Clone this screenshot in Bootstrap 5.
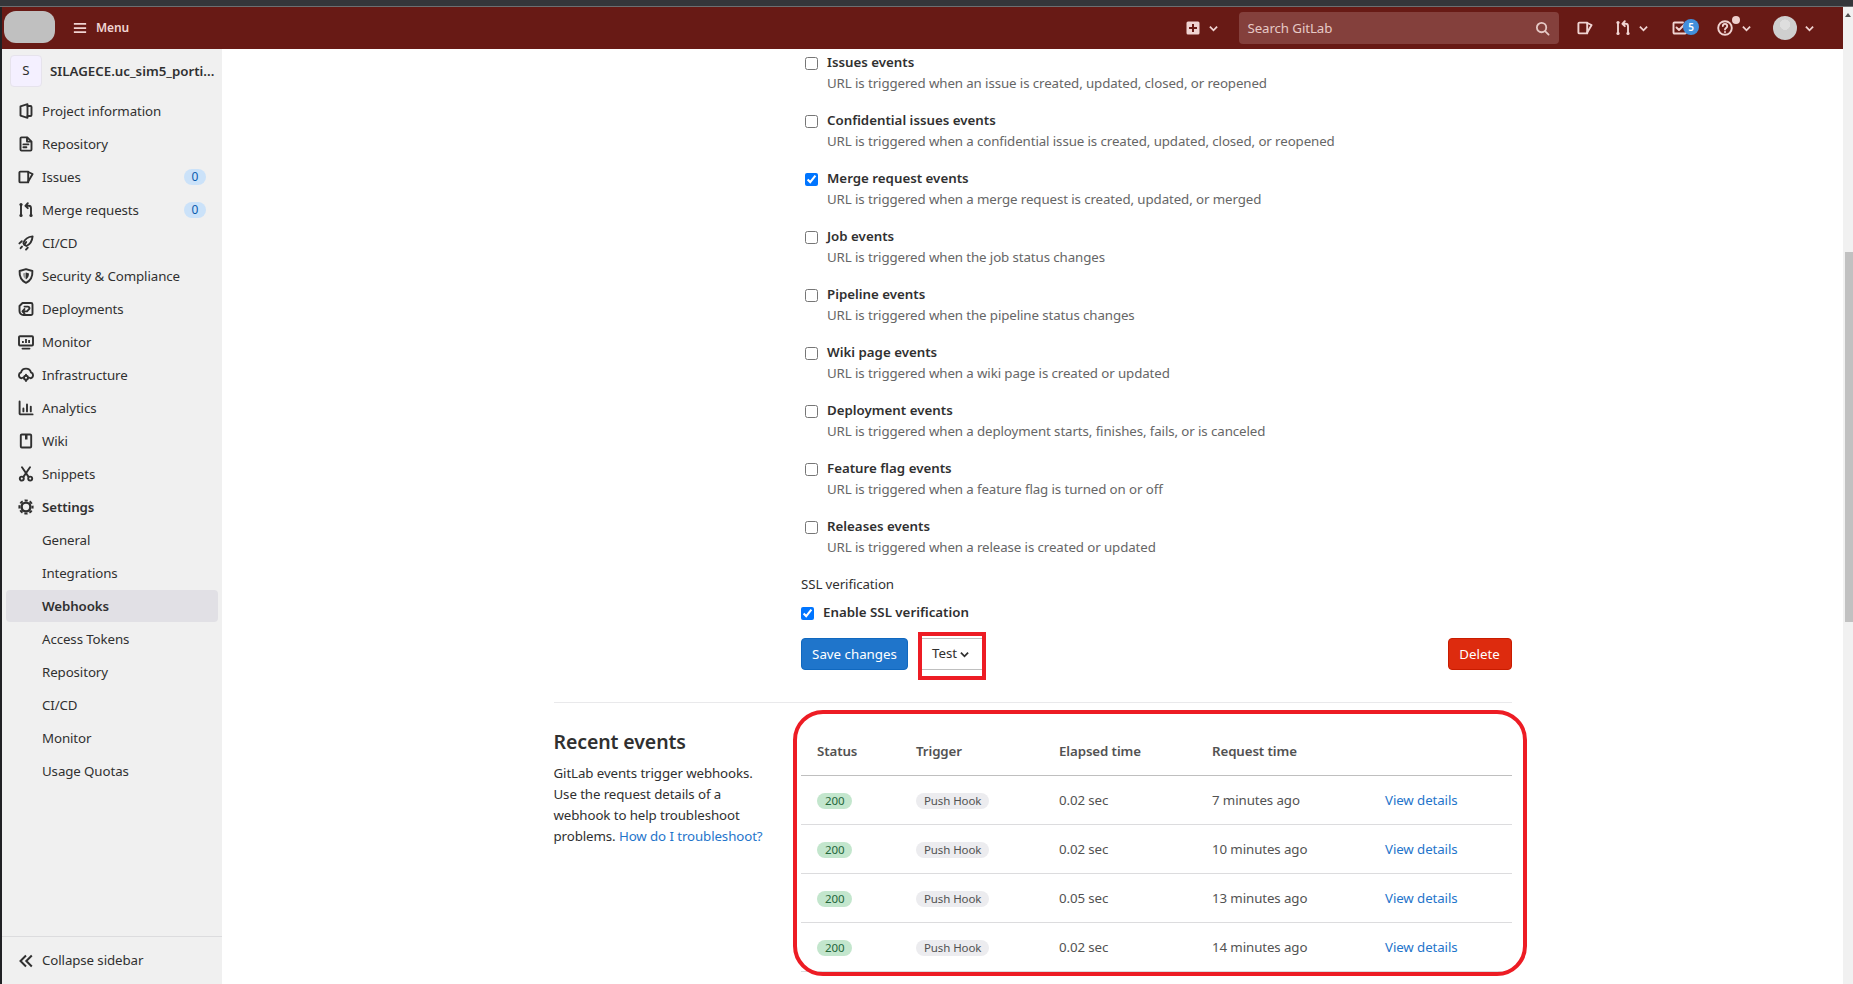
<!DOCTYPE html>
<html lang="en"><head><meta charset="utf-8"><title>Webhooks</title>
<link rel="stylesheet" href="https://cdn.jsdelivr.net/npm/bootstrap@5.3.0/dist/css/bootstrap.min.css">
<style>
html,body{height:100%;overflow:hidden}
body{font-family:"Noto Sans","Liberation Sans",sans-serif;font-size:13.3px;color:#303030;background:#fff;letter-spacing:-.1px}
.chrome-top{height:7px;background:#35363a;border-bottom:1px solid #6d6e70;flex:none}
.edge-strip{width:2px;background:#202124;flex:none}
.shell{height:977px}
.gl-bar{height:42px;background:#681a15;color:#f0d4d2;flex:none;padding:0}
.gl-logo{width:51px;height:32px;background:#c0c0c0;border-radius:12px;margin:0 0 2px 2px}
.gl-menu{margin-left:18px;font-size:12px;font-weight:600;color:#f0d4d2;gap:9px}
.gl-menu svg{width:14px;height:14px}
.bar-ico{width:16px;height:16px;flex:none}
.bar-chev{width:9px;height:9px;flex:none}
.gl-search{width:320px;height:32px;background:#84403c;border-radius:4px;padding:1px 9px 0;color:#e6c9c6;font-size:13.3px;margin-left:21px}
.todo-count{position:absolute;left:11px;top:-1px;width:16px;height:16px;border-radius:50%;background:#428fdc;color:#fff;font-size:10px;line-height:16px;text-align:center;font-weight:600}
.help-dot{position:absolute;left:15px;top:-4px;width:8px;height:8px;border-radius:50%;background:#eecfcd}
.gl-avatar{width:24px;height:24px;border-radius:50%;background:radial-gradient(circle at 50% 36%,#dedede 0 26%,#cfcfcf 27% 100%)}
.gl-side{width:220px;background:#f0f0f0;flex:none}
.proj-row{height:46px;margin-top:0;padding:6px 8px 0;gap:8px;font-weight:600;letter-spacing:0}
.proj-ava{width:32px;height:32px;background:#f4f0ff;border:1px solid #e6e3ec;border-radius:4px;font-weight:400;flex:none}
.side-list{padding:0;margin:0}
.side-item{height:32px;margin:0 4px 1px;padding:1px 0 0 12px;gap:8px;color:#303030;text-decoration:none;border-radius:4px}
.side-item svg{width:16px;height:16px;flex:none;margin-top:-1px}
.side-sub{padding-left:36px}
.side-on{font-weight:600}
.side-cur{background:#e1e0e5;font-weight:600}
.side-count{margin-left:auto;margin-right:8px;width:22px;height:16px;border-radius:8px;background:#cbe2f9;color:#0b5cad;font-size:12px;line-height:16px;text-align:center;position:relative;left:-4px;top:-1px}
.side-foot{height:48px;border-top:1px solid #dcdcde;padding-left:16px;gap:8px;margin-top:auto}
.side-foot svg{width:16px;height:16px}
.main-pane{min-width:0;overflow:hidden}
.limit-box{width:990px;padding:0 16px;margin:0 auto}
.hook-list{padding-top:3px;margin-left:247.5px}
.hook-row{height:58px;padding-left:0;margin:0;position:relative}
.hook-row input{position:absolute;left:4px;top:5px;margin:0;width:13px;height:13px}
.hook-name{display:block;font-weight:600;margin-left:26px;line-height:21px;padding-top:0;color:#303030;letter-spacing:0}
.hook-desc{margin-left:26px;line-height:21px;color:#666}
.ssl-title{margin:0;line-height:21px;height:29px}
.ssl-row{height:35px;gap:9px;font-weight:600;letter-spacing:0}
.ssl-row input{margin:4px 0 0;width:13px;height:13px}
.act-row{margin-top:0;height:32px;gap:13px}
.btn-save,.btn-del{--bs-btn-padding-x:0;--bs-btn-padding-y:0;height:32px;line-height:30px;font-size:13.3px;border-radius:4px;color:#fff}
.btn-save{width:107px;background:#1f75cb;border-color:#1068bf}
.btn-del{width:64px;background:#dd2b0e;border-color:#c91c00;margin-left:auto}
.btn-save:hover{background:#1f75cb;color:#fff}.btn-del:hover{background:#dd2b0e;color:#fff}
.test-wrap{position:relative;width:62px}
.btn-test{--bs-btn-padding-x:0;--bs-btn-padding-y:0;width:62px;height:32px;padding-right:3px;font-size:13.3px;border-radius:0;border:0;border-top:1px solid #bfbfbf;border-bottom:1px solid #bfbfbf;color:#303030;gap:3px}
.btn-test svg{width:9px;height:9px}
.mark-square{position:absolute;left:-3px;right:-3px;top:-6px;bottom:-10px;border:4px solid #ed1c24;pointer-events:none}
.mark-round{position:absolute;left:8px;right:1px;top:7px;bottom:-4px;border:4px solid #ed1c24;border-radius:30px;pointer-events:none}
.sep-line{border:0;border-top:1px solid #e9e9eb;opacity:1;margin:32px 0 0}
.events-row{--bs-gutter-x:32px;position:relative}
.events-aside{padding-top:27px}
.events-head{font-size:19.5px;font-weight:600;line-height:24px;margin:0 0 9px;color:#303030}
.events-text{line-height:21px;margin:0;color:#303030}
.events-text a,.ev-link{color:#1f75cb;text-decoration:none}
.events-col{position:relative;padding-top:7px}
.ev-table{--bs-table-bg:transparent;margin:0;table-layout:fixed;width:711px}
.ev-table th{height:65px;padding:0 0 13px 16px;vertical-align:bottom;font-weight:600;color:#525252;border-bottom:1px solid #bfbfbf}
.ev-table td{height:49px;padding:2px 0 0 16px;vertical-align:middle;color:#525252;border-bottom:1px solid #dcdcde}
.ok-pill{display:inline-block;background:#c3e6cd;color:#24663b;font-size:11.5px;line-height:16px;height:16px;padding:0 8px;border-radius:8px}
.hook-pill{display:inline-block;background:#ececef;color:#525252;font-size:11.5px;line-height:16px;height:16px;padding:0 8px;border-radius:8px}
.fake-scroll{width:10px;background:#f1f1f1;flex:none;position:relative}
.fake-thumb{position:absolute;left:2px;right:0;top:245px;height:370px;background:#c1c1c1}
.fake-arrow{position:absolute;left:2px;top:6px;width:0;height:0;border:3px solid transparent;border-top:0;border-bottom:4px solid #505050}
.sk{fill:none;stroke:currentColor;stroke-width:1.9;stroke-linecap:round;stroke-linejoin:round}
</style></head>
<body class="d-flex flex-column">
<svg width="0" height="0" class="position-absolute">
<symbol id="i-proj" viewBox="0 0 16 16"><path class="sk" d="M2.5 3.4 9.500 1.200v13.600L2.500 12.600z"/><path class="sk" d="M9.500 3h3a1 1 0 0 1 1 1v8a1 1 0 0 1-1 1h-3"/></symbol>
<symbol id="i-repo" viewBox="0 0 16 16"><path class="sk" d="M2.500 2.400a1 1 0 0 1 1-1h5.800l4.200 4.200v8a1 1 0 0 1-1 1h-9a1 1 0 0 1-1-1z"/><path class="sk" d="M9 1.800v3.800h4M5.400 8.400h5M5.400 11.200h3"/></symbol>
<symbol id="i-issue" viewBox="0 0 16 16"><path class="sk" d="M10.200 2.600H2.400a1 1 0 0 0-1 1v8.800a1 1 0 0 0 1 1h7.800z"/><path class="sk" d="M10.200 3 14.600 5 10.200 12.400"/></symbol>
<symbol id="i-mr" viewBox="0 0 16 16"><path class="sk" d="M3 3.500v8.500M13 12V6.200A2.400 2.400 0 0 0 10.600 3.800H7.800M9.800 1.200 7.400 3.800l2.400 2.400"/><circle cx="3" cy="2.600" r="1.600" fill="currentColor"/><circle cx="3" cy="13.400" r="1.600" fill="currentColor"/><circle cx="13" cy="13.400" r="1.600" fill="currentColor"/></symbol>
<symbol id="i-ci" viewBox="0 0 16 16"><path class="sk" d="M6.400 9.800 5.400 8C6.800 4.200 10 1.800 14.600 1.400 14.200 6 12 9.400 8.400 11z"/><path class="sk" d="M8.200 7 6.400 9.800M3.800 6.200 1.400 8.400M9.800 12.600 8 14.600M4 11.600 2.600 13.200"/></symbol>
<symbol id="i-shield" viewBox="0 0 16 16"><path class="sk" d="M8 1.200 14.400 3c.3 5.400-1.600 9.600-6.400 11.800C3.200 12.600 1.300 8.400 1.600 3z"/><path d="M8 4.500 11 5.400C11 8 10 10 8 11.400z" fill="currentColor"/><path d="M8 4.500 5 5.400C5 8 6 10 8 11.400z" fill="currentColor" opacity=".45"/></symbol>
<symbol id="i-dep" viewBox="0 0 16 16"><path class="sk" d="M4.500 2H13a1.500 1.500 0 0 1 1.500 1.500v9A1.500 1.500 0 0 1 13 14H5.500a4 4 0 0 1-4-4V5z"/><path class="sk" d="M6.500 5.600h3.500a1.500 1.500 0 0 1 1 2.600L9 10.400H6.500M6.500 8 4.500 10.400 6.500 12.600" stroke-width="1.500"/></symbol>
<symbol id="i-mon" viewBox="0 0 16 16"><path class="sk" d="M2 2.200h12a1 1 0 0 1 1 1v7.300a1 1 0 0 1-1 1H2a1 1 0 0 1-1-1V3.200a1 1 0 0 1 1-1zM4.500 14.600h7"/><path d="M4 7h1.800v2H4zM7.100 5h1.800v4H7.100zM10.200 6h1.800v3h-1.800z" fill="currentColor"/></symbol>
<symbol id="i-inf" viewBox="0 0 16 16"><path class="sk" d="M3.500 11.200A3 3 0 0 1 3 5.400 5.200 5.200 0 0 1 13 5.400a3 3 0 0 1-.5 5.800"/><circle cx="8" cy="10.800" r="2" class="sk"/><path class="sk" d="M8 7.600v.6M8 13.400v.6M4.800 10.800h.6M10.600 10.800h.6"/></symbol>
<symbol id="i-ana" viewBox="0 0 16 16"><path class="sk" d="M1.600 1.400v12a1 1 0 0 0 1 1h12"/><path class="sk" d="M5.400 8.400v3M9 4.400v7M12.800 6.600v4.800"/></symbol>
<symbol id="i-wiki" viewBox="0 0 16 16"><path class="sk" d="M3.800 1.500h8.400a1 1 0 0 1 1 1v11a1 1 0 0 1-1 1H3.800a1 1 0 0 1-1-1v-11a1 1 0 0 1 1-1z"/><path d="M7 1.500h2.500v5H7z" fill="currentColor"/></symbol>
<symbol id="i-snip" viewBox="0 0 16 16"><path class="sk" d="M4 1.200 10.400 10.600M12 1.200 5.600 10.600"/><circle class="sk" cx="3.800" cy="12.600" r="2"/><circle class="sk" cx="12.200" cy="12.600" r="2"/></symbol>
<symbol id="i-gear" viewBox="0 0 16 16"><circle cx="8" cy="8" r="4.400" fill="none" stroke="currentColor" stroke-width="2.400"/><circle cx="8" cy="8" r="6.600" fill="none" stroke="currentColor" stroke-width="2" stroke-dasharray="3.2 1.98" stroke-dashoffset="1.6"/></symbol>
<symbol id="i-back" viewBox="0 0 16 16"><path d="M8 2.500 2.500 8 8 13.500M13.800 2.500 8.300 8l5.500 5.500" fill="none" stroke="currentColor" stroke-width="2"/></symbol>
<symbol id="i-chev" viewBox="0 0 10 10"><path d="M1 3 5 7 9 3" fill="none" stroke="currentColor" stroke-width="2"/></symbol>
</svg>
<div class="chrome-top"></div>
<div class="d-flex shell">
<div class="edge-strip"></div>
<div class="d-flex flex-column flex-grow-1 main-pane">
<nav class="navbar gl-bar d-flex align-items-center flex-nowrap justify-content-start">
  <div class="gl-logo"></div>
  <div class="gl-menu d-flex align-items-center"><svg viewBox="0 0 16 16"><path d="M1 3.200h14M1 8h14M1 12.800h14" stroke="currentColor" stroke-width="2"/></svg>Menu</div>
  <div class="ms-auto d-flex align-items-center">
    <svg class="bar-ico" viewBox="0 0 16 16"><path fill="currentColor" fill-rule="evenodd" d="M3 1.500h10A1.500 1.500 0 0 1 14.500 3v10a1.500 1.500 0 0 1-1.500 1.500H3A1.500 1.500 0 0 1 1.500 13V3A1.500 1.500 0 0 1 3 1.500zM7 4v3H4v2h3v3h2V9h3V7H9V4z"/></svg>
    <svg class="bar-chev ms-2" viewBox="0 0 10 10"><use href="#i-chev"/></svg>
    <div class="gl-search d-flex align-items-center justify-content-between"><span>Search GitLab</span><svg width="15" height="15" viewBox="0 0 16 16"><circle class="sk" cx="7" cy="7" r="5"/><path class="sk" d="M11 11l3.500 3.500"/></svg></div>
    <svg class="bar-ico" style="margin-left:18px"><use href="#i-issue"/></svg>
    <svg class="bar-ico" style="margin-left:22px"><use href="#i-mr"/></svg>
    <svg class="bar-chev" style="margin-left:8px"><use href="#i-chev"/></svg>
    <span class="position-relative" style="margin-left:24.5px;height:16px;width:16px"><svg class="bar-ico d-block" viewBox="0 0 16 16"><path class="sk" d="M14 8v4.500a1 1 0 0 1-1 1H2.500a1 1 0 0 1-1-1V3.500a1 1 0 0 1 1-1H11M4.500 7.500 7 10l6.500-6.500"/></svg><span class="todo-count">5</span></span>
    <span class="position-relative" style="margin-left:29px;height:16px;width:16px"><svg class="bar-ico d-block" viewBox="0 0 16 16"><circle class="sk" cx="8" cy="8" r="6.800"/><path class="sk" d="M5.800 6a2.200 2.200 0 1 1 3.400 1.900C8.400 8.400 8 8.900 8 9.600"/><circle cx="8" cy="12" r="1" fill="currentColor"/></svg><span class="help-dot"></span></span>
    <svg class="bar-chev" style="margin-left:9px"><use href="#i-chev"/></svg>
    <div class="gl-avatar" style="margin-left:22px"></div>
    <svg class="bar-chev" style="margin-left:8px;margin-right:29px"><use href="#i-chev"/></svg>
  </div>
</nav>
<div class="d-flex flex-grow-1" style="min-height:0">
<aside class="gl-side d-flex flex-column">
  <div class="proj-row d-flex align-items-start"><span class="proj-ava d-flex align-items-center justify-content-center">S</span><span class="lh-1 text-nowrap" style="margin-top:10px">SILAGECE.uc_sim5_porti...</span></div>
  <div class="side-list d-flex flex-column">
    <a class="side-item d-flex align-items-center" href="#"><svg><use href="#i-proj"/></svg>Project information</a>
    <a class="side-item d-flex align-items-center" href="#"><svg><use href="#i-repo"/></svg>Repository</a>
    <a class="side-item d-flex align-items-center" href="#"><svg><use href="#i-issue"/></svg>Issues<span class="side-count">0</span></a>
    <a class="side-item d-flex align-items-center" href="#"><svg><use href="#i-mr"/></svg>Merge requests<span class="side-count">0</span></a>
    <a class="side-item d-flex align-items-center" href="#"><svg><use href="#i-ci"/></svg>CI/CD</a>
    <a class="side-item d-flex align-items-center" href="#"><svg><use href="#i-shield"/></svg>Security &amp; Compliance</a>
    <a class="side-item d-flex align-items-center" href="#"><svg><use href="#i-dep"/></svg>Deployments</a>
    <a class="side-item d-flex align-items-center" href="#"><svg><use href="#i-mon"/></svg>Monitor</a>
    <a class="side-item d-flex align-items-center" href="#"><svg><use href="#i-inf"/></svg>Infrastructure</a>
    <a class="side-item d-flex align-items-center" href="#"><svg><use href="#i-ana"/></svg>Analytics</a>
    <a class="side-item d-flex align-items-center" href="#"><svg><use href="#i-wiki"/></svg>Wiki</a>
    <a class="side-item d-flex align-items-center" href="#"><svg><use href="#i-snip"/></svg>Snippets</a>
    <a class="side-item side-on d-flex align-items-center" href="#"><svg><use href="#i-gear"/></svg>Settings</a>
    <a class="side-item side-sub d-flex align-items-center" href="#">General</a>
    <a class="side-item side-sub d-flex align-items-center" href="#">Integrations</a>
    <a class="side-item side-sub side-cur d-flex align-items-center" href="#">Webhooks</a>
    <a class="side-item side-sub d-flex align-items-center" href="#">Access Tokens</a>
    <a class="side-item side-sub d-flex align-items-center" href="#">Repository</a>
    <a class="side-item side-sub d-flex align-items-center" href="#">CI/CD</a>
    <a class="side-item side-sub d-flex align-items-center" href="#">Monitor</a>
    <a class="side-item side-sub d-flex align-items-center" href="#">Usage Quotas</a>
  </div>
  <div class="side-foot d-flex align-items-center"><svg><use href="#i-back"/></svg>Collapse sidebar</div>
</aside>
<main class="flex-grow-1 main-pane">
<div class="limit-box">
  <div class="hook-list">
    <div class="hook-row"><input type="checkbox"><label class="hook-name">Issues events</label><div class="hook-desc">URL is triggered when an issue is created, updated, closed, or reopened</div></div>
    <div class="hook-row"><input type="checkbox"><label class="hook-name">Confidential issues events</label><div class="hook-desc">URL is triggered when a confidential issue is created, updated, closed, or reopened</div></div>
    <div class="hook-row"><input type="checkbox" checked><label class="hook-name">Merge request events</label><div class="hook-desc">URL is triggered when a merge request is created, updated, or merged</div></div>
    <div class="hook-row"><input type="checkbox"><label class="hook-name">Job events</label><div class="hook-desc">URL is triggered when the job status changes</div></div>
    <div class="hook-row"><input type="checkbox"><label class="hook-name">Pipeline events</label><div class="hook-desc">URL is triggered when the pipeline status changes</div></div>
    <div class="hook-row"><input type="checkbox"><label class="hook-name">Wiki page events</label><div class="hook-desc">URL is triggered when a wiki page is created or updated</div></div>
    <div class="hook-row"><input type="checkbox"><label class="hook-name">Deployment events</label><div class="hook-desc">URL is triggered when a deployment starts, finishes, fails, or is canceled</div></div>
    <div class="hook-row"><input type="checkbox"><label class="hook-name">Feature flag events</label><div class="hook-desc">URL is triggered when a feature flag is turned on or off</div></div>
    <div class="hook-row"><input type="checkbox"><label class="hook-name">Releases events</label><div class="hook-desc">URL is triggered when a release is created or updated</div></div>
    <p class="ssl-title">SSL verification</p>
    <div class="ssl-row d-flex align-items-start"><input type="checkbox" checked><span>Enable SSL verification</span></div>
    <div class="act-row d-flex align-items-center">
      <button class="btn btn-save" type="button">Save changes</button>
      <div class="test-wrap"><button class="btn btn-test d-flex align-items-center justify-content-center" type="button">Test<svg viewBox="0 0 10 10"><use href="#i-chev"/></svg></button><span class="mark-square"></span></div>
      <button class="btn btn-del" type="button">Delete</button>
    </div>
  </div>
  <hr class="sep-line">
  <div class="row events-row">
    <div class="col-3 events-aside">
      <h4 class="events-head">Recent events</h4>
      <p class="events-text">GitLab events trigger webhooks. Use the request details of a webhook to help troubleshoot problems. <a href="#">How do I troubleshoot?</a></p>
    </div>
    <div class="col-9 events-col">
      <table class="table ev-table">
        <colgroup><col style="width:99px"><col style="width:143px"><col style="width:153px"><col style="width:173px"><col></colgroup>
        <thead><tr><th>Status</th><th>Trigger</th><th>Elapsed time</th><th>Request time</th><th></th></tr></thead>
        <tbody>
        <tr><td><span class="ok-pill">200</span></td><td><span class="hook-pill">Push Hook</span></td><td>0.02 sec</td><td>7 minutes ago</td><td><a class="ev-link" href="#">View details</a></td></tr>
        <tr><td><span class="ok-pill">200</span></td><td><span class="hook-pill">Push Hook</span></td><td>0.02 sec</td><td>10 minutes ago</td><td><a class="ev-link" href="#">View details</a></td></tr>
        <tr><td><span class="ok-pill">200</span></td><td><span class="hook-pill">Push Hook</span></td><td>0.05 sec</td><td>13 minutes ago</td><td><a class="ev-link" href="#">View details</a></td></tr>
        <tr><td><span class="ok-pill">200</span></td><td><span class="hook-pill">Push Hook</span></td><td>0.02 sec</td><td>14 minutes ago</td><td><a class="ev-link" href="#">View details</a></td></tr>
        </tbody>
      </table>
      <span class="mark-round"></span>
    </div>
  </div>
</div>
</main>
</div>
</div>
<div class="fake-scroll"><span class="fake-arrow"></span><span class="fake-thumb"></span></div>
</div>
<script src="https://cdn.jsdelivr.net/npm/bootstrap@5.3.0/dist/js/bootstrap.bundle.min.js"></script>
</body></html>
